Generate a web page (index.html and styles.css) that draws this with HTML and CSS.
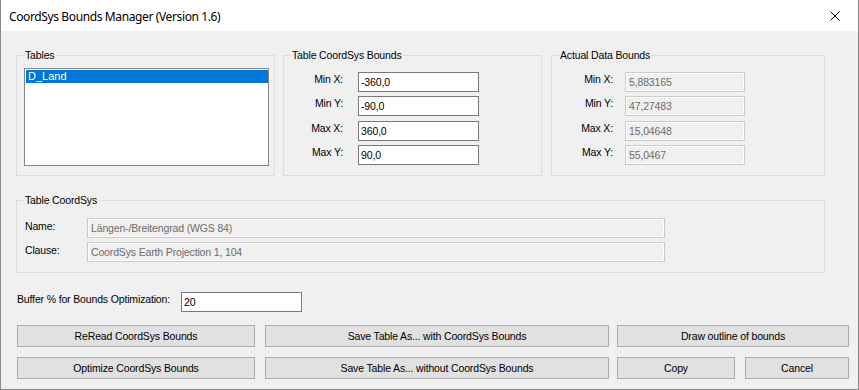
FILE: index.html
```html
<!DOCTYPE html>
<html>
<head>
<meta charset="utf-8">
<link rel="stylesheet" href="styles.css">
</head>
<body>
<div class="window">
  <div class="titlebar">
    <span class="title">CoordSys Bounds Manager (Version 1.6)</span>
    <svg class="close" width="10" height="10" viewBox="0 0 10 10"><path d="M0.5 0.5 L9.5 9.5 M9.5 0.5 L0.5 9.5" stroke="#000" stroke-width="1" fill="none"/></svg>
  </div>
  <div class="client">
    <div class="row-top">
      <div class="group g-tables">
        <span class="legend">Tables</span>
        <div class="listbox">
          <div class="item selected">D_Land</div>
        </div>
      </div>
      <div class="group g-bounds">
        <span class="legend">Table CoordSys Bounds</span>
        <div class="fields f-bounds">
          <span class="lbl">Min X:</span><div class="edit">-360,0</div>
          <span class="lbl">Min Y:</span><div class="edit">-90,0</div>
          <span class="lbl">Max X:</span><div class="edit">360,0</div>
          <span class="lbl">Max Y:</span><div class="edit">90,0</div>
        </div>
      </div>
      <div class="group g-actual">
        <span class="legend">Actual Data Bounds</span>
        <div class="fields f-actual">
          <span class="lbl">Min X:</span><div class="edit disabled">5,883165</div>
          <span class="lbl">Min Y:</span><div class="edit disabled">47,27483</div>
          <span class="lbl">Max X:</span><div class="edit disabled">15,04648</div>
          <span class="lbl">Max Y:</span><div class="edit disabled">55,0467</div>
        </div>
      </div>
    </div>
    <div class="group g-cs">
      <span class="legend">Table CoordSys</span>
      <div class="fields f-cs">
        <span class="lbl left">Name:</span><div class="edit disabled">Längen-/Breitengrad (WGS 84)</div>
        <span class="lbl left">Clause:</span><div class="edit disabled">CoordSys Earth Projection 1, 104</div>
      </div>
    </div>
    <div class="row-buffer">
      <span class="lbl left">Buffer % for Bounds Optimization:</span>
      <div class="edit buf">20</div>
    </div>
    <div class="btn-row first">
      <div class="btn w1">ReRead CoordSys Bounds</div>
      <div class="btn w2">Save Table As... with CoordSys Bounds</div>
      <div class="btn w3">Draw outline of bounds</div>
    </div>
    <div class="btn-row second">
      <div class="btn w1">Optimize CoordSys Bounds</div>
      <div class="btn w2">Save Table As... without CoordSys Bounds</div>
      <div class="btn w4">Copy</div>
      <div class="btn w5">Cancel</div>
    </div>
  </div>
</div>
</body>
</html>
```

FILE: styles.css
```css
* { box-sizing: border-box; }
html, body { margin: 0; padding: 0; }
body {
  width: 859px;
  height: 390px;
  overflow: hidden;
  font-family: "Liberation Sans", Arial, sans-serif;
  font-size: 10.5px;
  letter-spacing: -0.15px;
  color: #000;
}
.window {
  width: 859px;
  height: 390px;
  border: 1px solid #8a8a8a;
  border-top: none;
  display: flex;
  flex-direction: column;
  background: #f0f0f0;
}
.titlebar {
  height: 31px;
  background: #fff;
  display: flex;
  align-items: center;
  justify-content: space-between;
  padding-left: 8px;
  padding-right: 18px;
}
.title {
  font-family: "Noto Sans", sans-serif;
  font-size: 12px;
  letter-spacing: -0.38px;
  color: #000;
  position: relative;
  top: 1px;
}
.close { display: block; }
.client {
  flex: 1;
  padding: 24px 0 0 15px;
  display: flex;
  flex-direction: column;
}
.group {
  position: relative;
  border: 1px solid #dcdcdc;
}
.legend {
  position: absolute;
  top: -8px;
  left: 7px;
  padding: 0 1px 0 1px;
  background: #f0f0f0;
  line-height: 14px;
  white-space: nowrap;
}
.row-top {
  display: flex;
  height: 121px;
}
.g-tables { width: 259px; margin-right: 8px; padding: 12px 0 0 7px; }
.g-bounds { width: 259px; margin-right: 9px; padding: 16px 0 0 0; }
.g-actual { width: 274px; padding: 16px 0 0 0; }
.listbox {
  width: 245px;
  height: 98px;
  border: 1px solid #828790;
  background: #fff;
  padding: 1px 0 0 1px;
}
.item {
  height: 13px;
  line-height: 13px;
  padding-left: 2px;
  font-size: 11px;
  letter-spacing: 0;
}
.item.selected { background: #0078d7; color: #fff; }
.fields {
  display: grid;
  grid-auto-rows: 20px;
  row-gap: 4.34px;
  align-items: start;
}
.f-bounds { grid-template-columns: 59px 121px; column-gap: 15px; }
.f-actual { grid-template-columns: 61px 120px; column-gap: 12px; }
.lbl {
  text-align: right;
  line-height: 14px;
  white-space: nowrap;
}
.lbl.left { text-align: left; }
.edit {
  height: 20px;
  border: 1px solid #7a7a7a;
  background: #fff;
  padding: 0 0 0 2px;
  line-height: 18px;
  white-space: nowrap;
  overflow: hidden;
}
.edit.disabled {
  border-color: #cccccc;
  background: #f0f0f0;
  box-shadow: inset 0 0 0 1px #fff;
  color: #6d6d6d;
  padding-left: 3px;
}
.g-cs {
  width: 809px;
  height: 73px;
  margin-top: 24px;
  padding: 17px 0 0 8px;
}
.f-cs { grid-template-columns: 62px 578px; row-gap: 4px; }
.f-cs .lbl { line-height: 16px; }
.row-buffer {
  display: flex;
  align-items: flex-start;
  margin-top: 19px;
  padding-left: 1px;
}
.row-buffer .lbl { width: 164px; line-height: 15px; }
.edit.buf { width: 121px; }
.btn-row {
  display: flex;
  padding-left: 1px;
}
.btn-row.first { margin-top: 13px; }
.btn-row.second { margin-top: 10px; }
.btn {
  height: 22px;
  border: 1px solid #adadad;
  background: #e1e1e1;
  display: flex;
  align-items: center;
  justify-content: center;
  white-space: nowrap;
  padding-bottom: 1px;
}
.w1 { width: 238px; margin-right: 10px; }
.w2 { width: 344px; margin-right: 8px; }
.w3 { width: 232px; }
.w4 { width: 118px; margin-right: 10px; }
.w5 { width: 104px; }
```
